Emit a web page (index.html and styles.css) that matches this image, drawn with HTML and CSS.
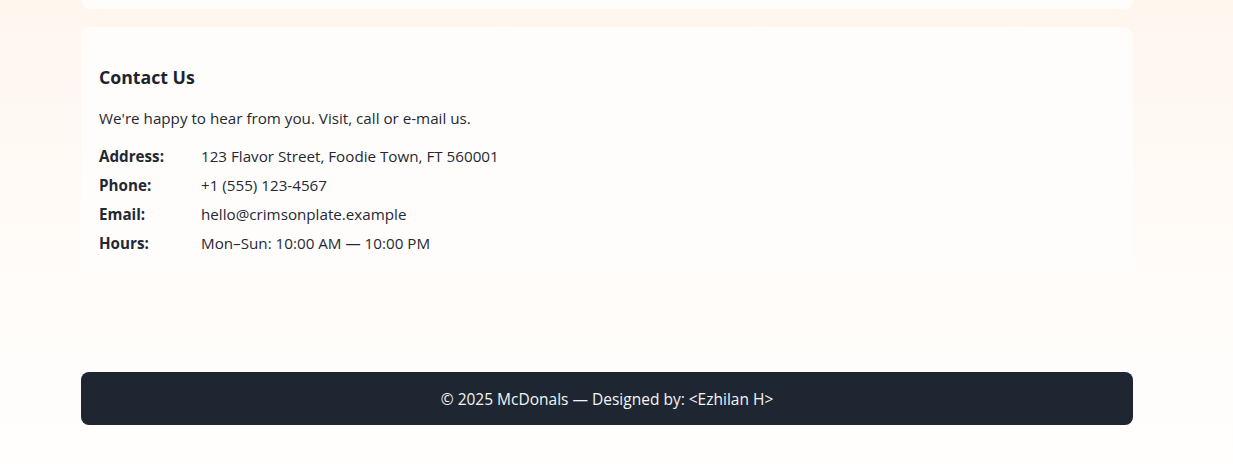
FILE: index.html
```html
<!DOCTYPE html>
<html lang="en">
<head>
<meta charset="utf-8">
<title>Contact</title>
<link rel="stylesheet" href="styles.css">
</head>
<body>
<div class="page">
  <div class="card card-prev"></div>
  <section class="card contact">
    <h2 class="contact-title">Contact Us</h2>
    <p class="contact-intro">We're happy to hear from you. Visit, call or e-mail us.</p>
    <dl class="contact-list">
      <div class="contact-row"><dt>Address:</dt><dd>123 Flavor Street, Foodie Town, FT 560001</dd></div>
      <div class="contact-row"><dt>Phone:</dt><dd>+1 (555) 123-4567</dd></div>
      <div class="contact-row"><dt>Email:</dt><dd>hello@crimsonplate.example</dd></div>
      <div class="contact-row"><dt>Hours:</dt><dd>Mon–Sun: 10:00 AM — 10:00 PM</dd></div>
    </dl>
  </section>
  <footer class="site-footer">© 2025 McDonals — Designed by: &lt;Ezhilan H&gt;</footer>
</div>
</body>
</html>
```
FILE: styles.css
```css
html, body {
  margin: 0;
  padding: 0;
}
body {
  min-height: 464px;
  background: linear-gradient(180deg, #fff6ee 0%, #fffcf9 60%, #fffefd 100%);
  font-family: "Open Sans", "Noto Sans", sans-serif;
  color: #1f2933;
}
.page {
  width: 1052px;
  margin: 0 100px 0 81px;
  display: flex;
  flex-direction: column;
}
.card {
  background: #fffdfb;
  border-radius: 10px;
}
.card-prev {
  height: 9px;
  border-radius: 0 0 10px 10px;
}
.contact {
  margin-top: 18px;
  padding: 38px 18px 13px;
}
.contact-title {
  margin: 0 0 18px;
  font-size: 17.7px;
  line-height: 24px;
  font-weight: 700;
  color: #1b2430;
}
.contact-intro {
  margin: 0 0 12px;
  font-size: 15.2px;
  line-height: 22px;
}
.contact-list {
  margin: 0;
  display: flex;
  flex-direction: column;
}
.contact-row {
  display: flex;
  height: 29px;
  align-items: center;
  font-size: 15.2px;
}
.contact-row dt {
  width: 102px;
  font-weight: 700;
}
.contact-row dd {
  margin: 0;
}
.site-footer {
  margin-top: 102px;
  height: 53px;
  border-radius: 8px;
  background: #1e2731;
  color: #f3f4f6;
  font-size: 15.5px;
  display: flex;
  align-items: center;
  justify-content: center;
}
```
